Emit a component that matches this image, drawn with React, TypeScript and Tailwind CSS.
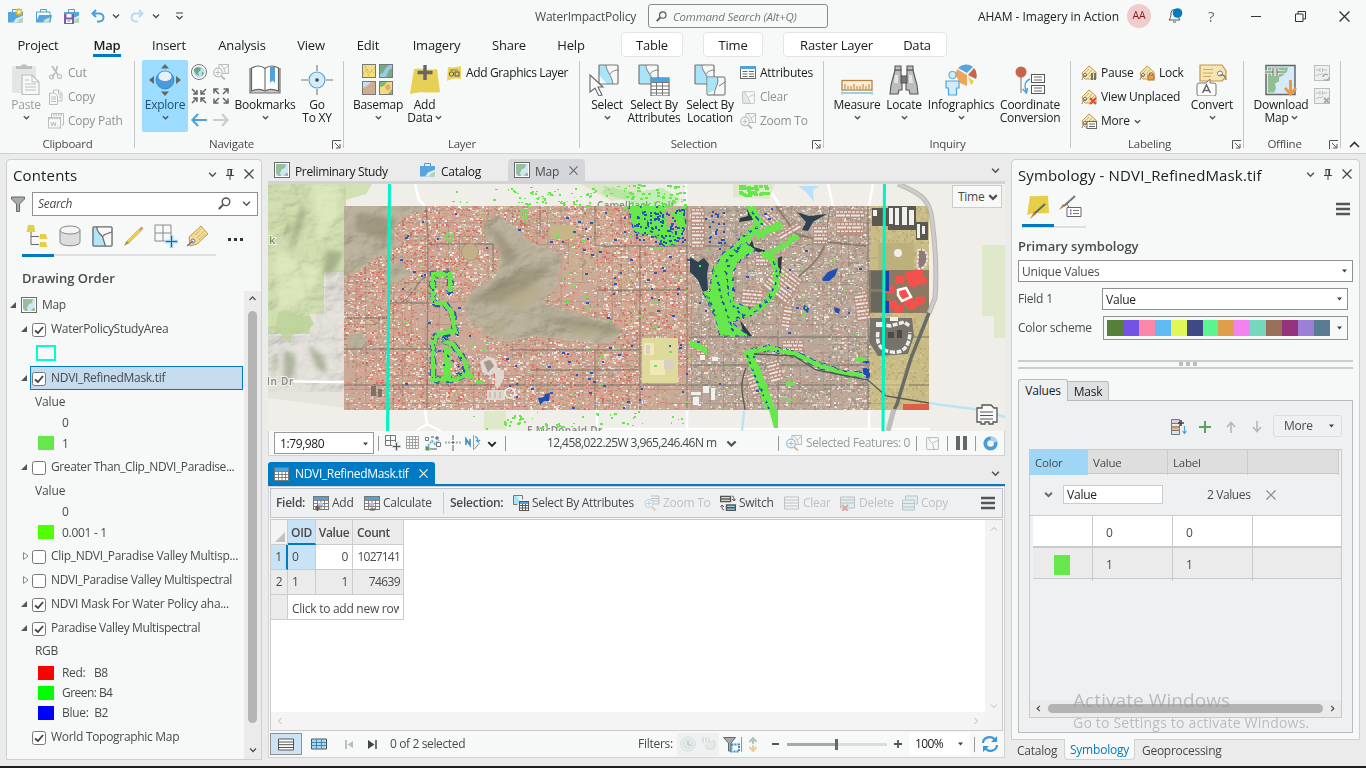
import React from "react";

type P = { children?: React.ReactNode; className?: string };

/* ---------- icon helpers ---------- */
const Ic = ({ s = 16, w, h, vb, children, className = "" }: { s?: number; w?: number; h?: number; vb?: string; children?: React.ReactNode; className?: string }) => (
  <svg width={w ?? s} height={h ?? s} viewBox={vb ?? `0 0 ${w ?? s} ${h ?? s}`} fill="none" className={"shrink-0 " + className}>{children}</svg>
);
const Chev = ({ c = "#505050", s = 8, sw = 1.5 }: { c?: string; s?: number; sw?: number }) => (
  <Ic w={s} h={s} vb="0 0 8 8"><path d="M1 2.500l3 3 3-3" stroke={c} strokeWidth={sw} /></Ic>
);
const Caret = () => <Ic w={5} h={4}><path d="M0 .5h5L2.500 3.500z" fill="#404040" /></Ic>;
const X = ({ c = "#404040", s = 10 }: { c?: string; s?: number }) => <Ic w={s} h={s} vb="0 0 10 10"><path d="M.5.5l9 9M9.500.5l-9 9" stroke={c} strokeWidth="1.200" /></Ic>;
const Pin = () => <Ic w={8} h={11}><path d="M1.500.500h5M2 0v6M5.500 0v6M4.800 0v6M0 6.500h8M4 6.500V11" stroke="#404040" /></Ic>;
const Burger = ({ w = 14 }: { w?: number }) => <Ic w={w} h={14}><path d={`M0 2h${w}M0 7h${w}M0 12h${w}`} stroke="#555" strokeWidth="2.600" /></Ic>;
const MapIcon = () => (
  <Ic s={16}><rect x=".5" y=".5" width="15" height="15" fill="#fff" stroke="#6a6a6a" /><path d="M2 2h12v12H2z" fill="#cfe6f7" /><path d="M2 2h10l-1 4-3 1-2 4 1 3H4l-1-2H2z" fill="#98bf99" /><path d="M10 14h4v-3h-2z" fill="#98bf99" /></Ic>
);
const Parcel = ({ s = 22, fill = "#b3e5f7", c = "#6a6a6a" }: { s?: number; fill?: string; c?: string }) => (
  <Ic s={s} vb="0 0 22 22"><rect x="1" y="1" width="20" height="20" rx="1" fill="#f7f9f8" /><path d="M1 1h4c0 5 3 7 6 10l3 10H1z" fill={fill} /><path d="M5 1c0 5 3 7 6 10l3 10M11 11C13 8 17 8 21 6" stroke={c} strokeWidth="1.300" /><rect x="1" y="1" width="20" height="20" rx="1" stroke={c} strokeWidth="1.400" /></Ic>
);
const Case = ({ k }: { k: number }) => (
  <Ic s={16}>
    <path d="M4.500 4V1.500h6V4" stroke="#4a9fd8" />
    {k === 1 ? <><path d="M.5 14V4h13.500v3" stroke="#4a9fd8" fill="#fff" /><path d="M0 14.500L3 7h13l-1.500 7.500z" fill="#57a5dc" /><path d="M7 14.500c1-3 3-4 7-5l-1 5z" fill="#cfe3c5" /></> : <><path d="M0 4h15v10.500H0z" fill="#57a5dc" /><path d="M5 14.500l3-4 7-3v7z" fill="#d5ecf5" /><path d="M9 14.500l2-3 4-2v5z" fill="#b5d6a6" /></>}
    {k === 0 && <g stroke="#d9b838" strokeWidth="1.200"><circle cx="11" cy="4" r="2.300" fill="#fff3b0" /><path d="M11 0v1M11 7v1M7 4h1M14 4h1.500M8 1l1 1M14 1l-1 1M8 7l1-1M14 7l-1-1" /></g>}
    {k === 2 && <><path d="M0 6h10v10H0z" fill="#7d5fa8" /><path d="M2.500 6h5v3.500h-5zM2 11.500h6V15H2z" fill="#fff" /><path d="M3.500 13h3" stroke="#7d5fa8" /></>}
  </Ic>
);
const Undo = ({ flip = false, c = "#4a9fd8" }: { flip?: boolean; c?: string }) => (
  <Ic s={14} className={flip ? "-scale-x-100" : ""}><path d="M5 1L1.500 4.500 5 8M2 4.500h6.500a4 4 0 010 8H6" stroke={c} strokeWidth="2" /></Ic>
);
const Dim = "#bdbdbd";
const Cut = () => <Ic><path d="M4 1l6 9M9.500 1L8 6M7 8l-3 4" stroke={Dim} strokeWidth="1.800" /><circle cx="3.500" cy="12" r="2" stroke={Dim} strokeWidth="1.200" /><circle cx="11.500" cy="11.500" r="2" stroke={Dim} strokeWidth="1.200" /></Ic>;
const CopyI = () => <Ic><path d="M5.500 1h5l3.500 3.500V12H5.500z" fill="#f7f9f8" stroke={Dim} /><path d="M1.500 4h5L9.500 7v8.500h-8z" fill="#f7f9f8" stroke={Dim} /><path d="M3 8h5M3 10h5M3 12.500h5M10.500 1v4H14M11 7h2M11 9h2" stroke={Dim} /></Ic>;
const CopyPath = () => <Ic><path d="M3.500 4V.5h12V12H14" stroke={Dim} /><path d="M5 2h9M1 5.500h12" stroke={Dim} strokeWidth="1.500" strokeDasharray="1.500 1" /><rect x=".5" y="4.500" width="12" height="10.500" stroke={Dim} /><path d="M3 9l1 4 1.500-4 1.500 4 1-4M9.500 13h1" stroke={Dim} /></Ic>;
const Paste = () => <Ic w={28} h={31}><rect x="0" y="2" width="24" height="27" rx="2" fill="#e4e5e5" /><path d="M4 5V2h5.500V.5h5V2H20v3z" fill={Dim} /><path d="M10 11h10l7 7v12.500H10z" fill="#f7f9f8" stroke={Dim} strokeWidth="1.200" /><path d="M20 11v7h7M13 16h4M13 20h11M13 23h11M13 26h11" stroke={Dim} /></Ic>;
const ExploreI = () => <Ic s={32}><path d="M16 0l4 4.500h-8zM16 32l4-4.500h-8zM0 16l5-4v8zM32 16l-5-4v8z" fill="#666" /><circle cx="16" cy="16" r="9" fill="#4a9bdb" stroke="#2c78b5" strokeWidth=".7" /><path d="M9.500 12.500a6.500 5 0 0113 0c0 6-13 6-13 0z" fill="#e6f1f8" /></Ic>;
const Globe = () => <Ic><circle cx="8" cy="8" r="7.500" fill="#fff" stroke="#777" /><circle cx="8" cy="8" r="5.700" fill="#b8ddf2" /><path d="M3 5l3-2 4 1-1 3-2 1 1 4-3-2-2-3zM11 8l2 1-2 3z" fill="#6ca97c" /></Ic>;
const ZoomSel = ({ c = Dim, blue = false }: { c?: string; blue?: boolean }) => <Ic><rect x="6" y=".5" width="9.500" height="9" stroke={c} /><path d="M8 1l3 4 4-3M11 5l2 5" stroke={c} /><circle cx="5" cy="8.500" r="4.300" fill="#f7f9f8" stroke={blue ? "#8fc0de" : c} strokeWidth="1.200" /><path d="M2.500 8.500h5M5 6v5" stroke={blue ? "#8fc0de" : c} /><path d="M8 12l4 3.500" stroke={blue ? "#d9b89a" : c} strokeWidth="2" /></Ic>;
const Arrows4 = ({ out = false }: { out?: boolean }) => (
  <Ic s={16}><path stroke="#666" strokeWidth="1.500" d={out ? "M1 1l5 5M1 5.500V1h4.500M15 1l-5 5M10.500 1H15v4.500M1 15l5-5M1 10.500V15h4.500M15 15l-5-5M10.500 15H15v-4.500" : "M1 1l4.500 4.500M2 6h4V2M15 1l-4.500 4.500M14 6h-4V2M1 15l4.500-4.500M2 10h4v4M15 15l-4.500-4.500M14 10h-4v4"} /></Ic>
);
const ArrowH = ({ c, flip = false }: { c: string; flip?: boolean }) => <Ic s={16} className={flip ? "-scale-x-100" : ""}><path d="M7 2L1.500 8 7 14M1.500 8H16" stroke={c} strokeWidth="2.200" /></Ic>;
const Book = () => <Ic w={32} h={30}><path d="M1 3h30v25H1z" fill="#c9c9c9" /><path d="M2.500 3C8 0 13 1 16 3.500 19 1 24 0 29.500 3v23c-5-2-10-2-13.500 0-3.500-2-8.500-2-13.500 0z" fill="#fff" stroke="#666" strokeWidth="1.200" /><path d="M16 3.500V26M1 3v25h30V3" stroke="#777" strokeWidth="1.200" /><path d="M21 2h5v16l-2.500-2.500L21 18z" fill="#4fa3dc" /></Ic>;
const GoXY = () => <Ic s={32}><circle cx="16" cy="16" r="8" fill="#d3ecfa" stroke="#5aa0cd" strokeWidth="1.100" /><circle cx="16" cy="16" r="1.800" fill="#444" /><path d="M16 1v6M16 25v6M0 16h7M25 16h7" stroke="#777" strokeWidth="1.100" /></Ic>;
const Basemap = () => <Ic w={32} h={31}><g stroke="#777"><rect x=".5" y=".5" width="13" height="13" fill="#efe082" /><rect x="17.500" y=".5" width="13" height="13" fill="#9ccbe8" /><rect x=".5" y="17.500" width="13" height="13" fill="#c9dff0" /><rect x="17.500" y="17.500" width="13" height="13" fill="#f1dd7c" /></g><path d="M1 10l4-5 3 4 5-6M3 2l4 10M9 6l4 4" stroke="#ddb33c" strokeDasharray="2 1" /><path d="M18 1h9l-4 4-2 4-3 1zM24 13l3-7 3-2v9z" fill="#75ad86" /><path d="M1 24l5-3 3-3h4v12H1z" fill="#cfae90" /><path d="M18 18h7l-3 4-4 1zM26 30l4-5v5z" fill="#82b77d" /><path d="M23 22l4-2 2 4-4 3z" fill="#eda46a" /></Ic>;
const AddData = () => <Ic w={32} h={32}><path d="M5 5c7-2 14 2 23 0l3 23c-9 2-18-2-30 2z" fill="#e6d154" /><path d="M16 1v15M8.500 8.500h15" stroke="#666" strokeWidth="3.400" /></Ic>;
const AddGfx = () => <Ic w={16} h={15}><path d="M2 1c4 1 8 0 13-1v13c-5-1-9-1-14 2z" fill="#ead45c" /><circle cx="5.500" cy="8" r="2.200" stroke="#555" /><rect x="9" y="6" width="4" height="4" stroke="#555" /><path d="M4 4h8" stroke="#8a7c3b" /></Ic>;
const SelIcon = ({ k }: { k: number }) => (
  <Ic s={32}>
    <g transform={k === 0 ? "translate(9 0)" : ""}><path d="M1 1h20v19H1z" fill="#f7f9f8" /><path d={k === 0 ? "M1 1h8c0 7 5 8 6 19h-6L1 11z" : "M1 1h7c1 7 6 8 6 11l-2 8H1z"} fill="#aae4f8" /><path d="M8 1c0 7 5 8 7 19M12 10c2-3 5-4 9-4" stroke="#888" /><rect x="1" y="1" width="19" height="19" rx="1" stroke="#777" strokeWidth="1.200" /></g>
    {k === 0 && <path d="M1 11l13 12H9l4 8-3 1-4-8-5 4z" fill="#fff" stroke="#666" strokeWidth="1.100" />}
    {k === 1 && <><rect x="13" y="14" width="18" height="18" fill="#fff" stroke="#555" /><path d="M13 14h18v4H13z" fill="#4fa3dc" /><path d="M13 18.500h18M13 22h18M13 25.500h18M13 29h18M18.500 18v13M24.500 18v13" stroke="#777" /></>}
    {k === 2 && <><rect x="13" y="13" width="18" height="18" rx="1" fill="#f7f9f8" stroke="#666" /><path d="M13.500 13.500H23c3 6-2 9-3 13l-6.500 3z" fill="#aae4f8" /><path d="M23 13c3 6-2 9-3 18M25 22l6-4" stroke="#777" /></>}
  </Ic>
);
const Grid = ({ c = "#777", top = "#4fa3dc", w = 16, sub = null }: { c?: string; top?: string; w?: number; sub?: React.ReactNode }) => (
  <Ic w={16} h={16}><rect x=".5" y="1.500" width={w - 1} height={13} fill="#fff" stroke={c} /><path d={`M1 2h${w - 2}v3H1z`} fill={top} /><path d={`M1 5.500h${w - 2}M1 8.500h${w - 2}M1 11.500h${w - 2}M4.500 5v9M8 5v9M11.500 5v9`} stroke={c} strokeWidth=".9" />{sub}</Ic>
);
const Attr = () => <Ic><rect x=".5" y="1.500" width="15" height="12" fill="#fff" stroke="#666" /><path d="M0 1h16v3H0z" fill="#4fa3dc" /><path d="M2.500 6.500h5M2.500 9h5M2.500 11.500h5M9 6.500h5M9 9h5M9 11.500h5" stroke="#666" /></Ic>;
const Measure = () => <Ic w={32} h={20} className="translate-y-[6px]"><rect x="1" y="4.500" width="30" height="9.500" fill="#f8eed7" stroke="#b78342" strokeWidth="1.300" /><path d="M4 8v5M7 10v3M10 10v3M13 8v5M16 10v3M19 10v3M22 8v5M25 10v3M28 8v5" stroke="#c07f2f" /><path d="M1 15.500v3M31 15.500v3M2 17h28" stroke="#45a0da" /></Ic>;
const Bino = () => <Ic w={30} h={30}><g stroke="#555" fill="#bdbdbd" strokeWidth="1.100"><path d="M6 5h6v4l1 4v12h-3l-1 4H1l1-9L5 9zM24 5h-6v4l-1 4v12h3l1 4h8l-1-9-3-11z" /><path d="M6 1h6v4H6zM18 1h6v4h-6z" /><path d="M12 11h6v7h-6z" fill="#777" /></g><path d="M6 10h3v8H5zM20 10h3l1 8h-4z" fill="#e4e4e4" /></Ic>;
const Info = () => <Ic w={32} h={32}><path d="M22 11L12 5a11 11 0 00-1 7l4 7 7 3z" fill="#efa45a" /><path d="M22 9L13 4a11 11 0 0115-1z" fill="#57a5dc" /><path d="M23 11l6-7a11 11 0 012 11z" fill="#c8644a" /><path d="M23 13l6 4a9 9 0 01-3 4z" fill="#e6cf4a" /><circle cx="7.500" cy="11" r="3.700" fill="#d3ecfa" stroke="#4fa3dc" /><path d="M1 24v-7h13v7h-2.500v7h-8v-7z" fill="#d3ecfa" stroke="#4fa3dc" strokeWidth="1.200" /></Ic>;
const Coord = () => <Ic w={32} h={30}><path d="M7 8v20" stroke="#777" /><circle cx="7" cy="7" r="5.500" fill="#c8644a" /><g fill="#fff" stroke="#555"><rect x="17.500" y="9.500" width="13" height="8" /><rect x="17.500" y="20.500" width="13" height="8" /></g><path d="M20 12h8M20 15h8M20 23h8M20 26h8" stroke="#666" /><path d="M16 14c-5 2-6 7-4 12M8.500 24l4 4 1-5" stroke="#4fa3dc" strokeWidth="1.500" /></Ic>;
const House = ({ sub }: { sub: React.ReactNode }) => <Ic><path d="M1 8L8 1l7 6v7H4l-2-2z" fill="#f5e5b2" stroke="#b9924e" strokeWidth=".9" /><path d="M3 9l5-5M5 11l6-6M8 12l5-5" stroke="#c4a565" strokeWidth=".8" /><circle cx="4" cy="10" r="1.600" fill="#fff" stroke="#777" /><path d="M1 15c1-4 3-5 4-4" stroke="#777" />{sub}</Ic>;
const Tag = () => <Ic w={32} h={32}><path d="M4 1h22l4 6v6l-4 4H4z" fill="#f5e5b2" stroke="#c69549" strokeWidth="1.200" /><path d="M7 5.500h10M7 9h10M7 12.500h8" stroke="#cda85e" /><circle cx="24" cy="9.500" r="2.500" fill="#fff" stroke="#777" /><path d="M24 11c4-1 6 2 6 5" stroke="#777" strokeWidth="1.300" /><path d="M3 19h7l4-4v4h4a2 2 0 012 2v9a2 2 0 01-2 2H3a2 2 0 01-2-2v-9a2 2 0 012-2z" fill="#fff" stroke="#777" /><path d="M6.500 29l4-8 4 8M8 26.500h5" stroke="#666" strokeWidth="1.500" /></Ic>;
const Download = () => <Ic w={32} h={32}><rect x="1" y="1.500" width="29" height="29" fill="#d6ebf9" stroke="#666" strokeWidth="1.500" /><path d="M3 3.500h20l-1 4-4 4-4 2 0 4-4 2 1 5-2 4H3z" fill="#92bf92" /><path d="M0 8h8M8 4v8M12 4v8M12 8h8" stroke="#fff" strokeWidth="3" /><path d="M0 8h8M8 4v8M12 4v8M12 8h8" stroke="#555" /><path d="M25.500 16v13M20 24l5.500 6 5.500-6" stroke="#ee9a42" strokeWidth="3" /></Ic>;
const OffI = ({ x = false }: { x?: boolean }) => <Ic><rect x=".5" y=".5" width="15" height="15" fill="#eef0f0" stroke={Dim} /><path d="M2 5h4M6 3v4M8.500 3v4M9 5h4M2 11c3-3 6 0 7-3" stroke={Dim} />{x ? <path d="M10 10l5 5M15 10l-5 5" stroke="#a8a8a8" strokeWidth="1.800" /> : <path d="M9 12a3 3 0 015-2M15 12.500a3 3 0 01-5 2" stroke="#a8a8a8" strokeWidth="1.600" />}</Ic>;
const Launcher = () => <Ic w={9} h={9}><path d="M.5 9V.5H9M3 3l4.500 4.500M8 4v4H4" stroke="#555" /></Ic>;
const Mag = ({ s = 13 }: { s?: number }) => <Ic s={s} vb="0 0 13 13"><circle cx="8" cy="4.800" r="3.800" stroke="#555" strokeWidth="1.400" /><path d="M5.200 7.600L.8 12" stroke="#555" strokeWidth="2" /></Ic>;

/* ---------- ribbon ---------- */
const Group = ({ w, label, items, launch = false, labelCls = "" }: { w: string; label: string; items: React.ReactNode; launch?: boolean; labelCls?: string }) => (
  <div className={"relative flex h-[96px] shrink-0 flex-col " + w}>
    <div className="flex h-[77px] pt-[3px]">{items}</div>
    <div className={"flex h-[19px] items-center justify-center text-[11.5px] text-[#4a4a4a] " + labelCls}>{label}</div>
    {launch && <div className="absolute right-[3px] bottom-[4px]"><Launcher /></div>}
    <div className="absolute right-0 top-1 h-[87px] w-px bg-[#c4c6c8]" />
  </div>
);
const Big = ({ w, icon, l1, l2, chev, tone = "" }: { w: string; icon: React.ReactNode; l1: string; l2?: string; chev?: boolean; tone?: string }) => (
  <div className={"flex h-[72px] shrink-0 flex-col items-center whitespace-nowrap leading-[13px] " + w + " " + tone}>
    <div className="flex h-[38px] items-center justify-center pt-[1px]">{icon}</div>
    <div>{l1}</div>
    <div className="flex h-[13px] items-center gap-[2px]">{l2}{chev && <Chev sw={1.500} s={7} />}</div>
  </div>
);
const Col = ({ children, className = "" }: P) => <div className={"flex flex-col pt-px " + className}>{children}</div>;
const SRow = ({ icon, children, dim = false }: { icon: React.ReactNode; children: React.ReactNode; dim?: boolean }) => (
  <div className={"flex h-6 items-center gap-1 whitespace-nowrap " + (dim ? "text-[#8f9191]" : "")}>{icon}{children}</div>
);
const tabs: [string, string][] = [["Project", "w-[76px]"], ["Map", "w-[62px] font-semibold"], ["Insert", "w-[62px]"], ["Analysis", "w-[84px]"], ["View", "w-[54px]"], ["Edit", "w-[60px]"], ["Imagery", "w-[77px]"], ["Share", "w-[68px]"], ["Help", "w-[56px]"]];

const Ribbon = () => (
  <header className="h-[154px] border-b border-[#cfd1d2] bg-[#f7f9f8] tracking-[-0.25px] text-[#202020]">
    <div className="flex h-8 items-center">
      <div className="flex w-[500px] items-center pl-2">
        <Case k={0} /><div className="w-3" /><Case k={1} /><div className="w-3" /><Case k={2} /><div className="w-[11px]" /><Undo /><div className="w-[7px]" /><Chev /><div className="w-[10px]" /><Undo flip c="#b9dbf0" /><div className="w-2" /><Chev /><div className="w-[15px]" />
        <Ic w={10} h={9}><path d="M1 1h7M1.500 4l3 3 3-3" stroke="#404040" strokeWidth="1.200" /></Ic>
      </div>
      <div className="w-[148px] pl-[35px] pt-px text-[12px] tracking-[-0.2px] text-[#4a4a4a]">WaterImpactPolicy</div>
      <div className="flex h-6 w-[180px] items-center gap-[7px] rounded-[3px] border border-[#8a8c8c] pl-[7px] text-[11.500px] italic text-[#767676]"><Mag s={11} /><span className="-ml-px pt-px tracking-[-0.2px]">Command Search (Alt+Q)</span></div>
      <div className="w-[300px] pr-[9px] pt-px text-right text-[12px] tracking-[-0.04px]">AHAM - Imagery in Action</div>
      <div className="-ml-px flex size-6 items-center justify-center rounded-full bg-[#f2cccc] text-[10.500px] text-[#7a1f1f]">AA</div>
      <Ic w={16} h={16} className="ml-4"><path d="M2 12h11c-1-1-2-3-2-7a3.500 3.500 0 00-7 0c0 4-1 6-2 7zM6 14h3" stroke="#555" /><circle cx="10.500" cy="5" r="4.800" fill="#007ac2" /></Ic>
      <div className="ml-[25px] w-3 text-[15px] text-[#6a6a6a]">?</div>
      <div className="ml-[31px] h-px w-[10px] bg-[#333]" />
      <Ic w={11} h={11} className="ml-[34px]"><path d="M.5 3h7.500v7.500H.5zM3 3V.5h7.500V8H8" stroke="#333" /></Ic>
      <div className="ml-[33px]"><X c="#333" s={11} /></div>
    </div>
    <div className="flex h-[25px] items-center text-center text-[13px] tracking-[-0.2px]">
      {tabs.map(([t, w]) => (
        <div key={t} className={"relative shrink-0 pt-[2px] " + w}>{t}{t === "Map" && <div className="absolute -bottom-[2px] left-[17px] h-[3px] w-7 bg-[#007ac2]" />}</div>
      ))}
      <div className="ml-[22px] h-[25px] w-[62px] rounded border border-[#e3e4e4] bg-white leading-[25px]">Table</div>
      <div className="ml-5 h-[25px] w-[60px] rounded border border-[#e3e4e4] bg-white leading-[25px]">Time</div>
      <div className="ml-5 flex h-[25px] w-[164px] rounded border border-[#e3e4e4] bg-white leading-[25px]"><span className="w-[105px]">Raster Layer</span><span className="w-[56px]">Data</span></div>
    </div>
    <div className="flex text-[12px]">
      <Group w="w-[135px]" label="Clipboard" items={<>
        <Big w="ml-[7px] w-[38px]" tone="text-[#9b9d9d]" icon={<Paste />} l1="Paste" chev />
        <Col className="ml-[3px]"><SRow dim icon={<Cut />}>Cut</SRow><SRow dim icon={<CopyI />}>Copy</SRow><SRow dim icon={<CopyPath />}>Copy Path</SRow></Col></>} />
      <Group w="w-[209px]" label="Navigate" labelCls="pr-[16px]" launch items={<>
        <Big w="ml-[7px] w-[46px] rounded-[2px] bg-[#9cdcfe]" icon={<ExploreI />} l1="Explore" chev tone="text-[#1f4e7a]" />
        <div className="ml-[3px] grid h-[72px] grid-cols-[16px_16px] items-center gap-x-[6px]"><Globe /><ZoomSel /><Arrows4 /><Arrows4 out /><ArrowH c="#4fa3dc" /><ArrowH c="#cbcdcd" flip /></div>
        <Big w="ml-[4px] w-[64px]" icon={<Book />} l1="Bookmarks" chev />
        <Big w="w-[40px]" icon={<GoXY />} l1="Go" l2="To XY" /></>} />
      <Group w="w-[236px]" label="Layer" launch={false} items={<>
        <Big w="ml-[8px] w-[52px]" icon={<Basemap />} l1="Basemap" chev />
        <Big w="w-[41px]" icon={<AddData />} l1="Add" l2="Data" chev />
        <Col className="ml-px"><SRow icon={<AddGfx />}><span className="tracking-[-0.36px]">Add Graphics Layer</span></SRow></Col></>} />
      <Group w="w-[244px]" label="Selection" labelCls="pr-[16px]" launch items={<>
        <Big w="ml-[8px] w-[38px]" icon={<div className="pr-1"><SelIcon k={0} /></div>} l1="Select" chev />
        <Big w="-ml-px w-[58px]" icon={<SelIcon k={1} />} l1="Select By" l2="Attributes" />
        <Big w="w-[54px]" icon={<SelIcon k={2} />} l1="Select By" l2="Location" />
        <Col className="ml-[3px]"><SRow icon={<Attr />}>Attributes</SRow><SRow dim icon={<div className="flex w-4 justify-center"><Parcel s={13} fill="#e5e6e6" c={Dim} /></div>}>Clear</SRow><SRow dim icon={<ZoomSel />}>Zoom To</SRow></Col></>} />
      <Group w="w-[247px]" label="Inquiry" items={<>
        <Big w="ml-[8px] w-[50px]" icon={<Measure />} l1="Measure" chev />
        <Big w="ml-px w-[42px]" icon={<Bino />} l1="Locate" chev />
        <Big w="ml-px w-[70px]" icon={<Info />} l1="Infographics" chev />
        <Big w="w-[68px]" icon={<Coord />} l1="Coordinate" l2="Conversion" /></>} />
      <Group w="w-[173px]" label="Labeling" labelCls="pr-[16px]" launch items={<>
        <Col className="ml-[10px] w-[106px]">
          <div className="flex"><div className="w-[58px]"><SRow icon={<House sub={<path d="M11 8v7M14 8v7" stroke="#666" strokeWidth="1.800" />} />}>Pause</SRow></div><SRow icon={<House sub={<><rect x="9" y="10" width="6" height="5" fill="#e8a04c" stroke="#a9702c" /><path d="M10.500 10V8h3v2" stroke="#a9702c" /></>} />}>Lock</SRow></div>
          <SRow icon={<House sub={<path d="M9 9l6 6M15 9l-6 6" stroke="#d9512c" strokeWidth="2" />} />}>View Unplaced</SRow>
          <SRow icon={<House sub={<><rect x="6" y="8.500" width="9.500" height="7" fill="#fff" stroke="#666" /><path d="M8 11h6M8 13.500h6" stroke="#666" /></>} />}>More <Chev s={7} /></SRow>
        </Col>
        <Big w="w-[50px]" icon={<Tag />} l1="Convert" chev /></>} />
      <Group w="w-[97px]" label="Offline" labelCls="pr-[16px]" launch items={<>
        <Big w="ml-[7px] w-[60px]" icon={<Download />} l1="Download" l2="Map" chev />
        <Col className="ml-[3px] h-12 justify-around"><OffI /><OffI x /></Col></>} />
      <div className="flex items-end pb-[5px] pl-[8px]"><Ic w={11} h={7}><path d="M1 6l4.500-4.500L10 6" stroke="#333" strokeWidth="1.600" /></Ic></div>
    </div>
  </header>
);

/* ---------- contents pane ---------- */
const Check = ({ on = true }: { on?: boolean }) => <Ic s={14}><rect x=".5" y=".5" width="13" height="13" rx="2" fill="#fff" stroke="#777" /> {on && <path d="M3 7.500L6 10l5-6" stroke="#444" strokeWidth="1.900" />}</Ic>;
const Tri = ({ open = true }: { open?: boolean }) => <Ic w={6} h={8}>{open ? <path d="M6 1v6H0z" fill="#555" /> : <path d="M.5.5v7L5 4z" fill="#fff" stroke="#888" />}</Ic>;
const Layer = ({ children, on = true, open = true, arrow = true, className = "" }: { children: React.ReactNode; on?: boolean; open?: boolean; arrow?: boolean; className?: string }) => (
  <div className={"flex h-6 items-center pl-[14px] " + className}>
    <div className={"flex w-[9px] items-center " + (open ? "" : "pl-[2px]")}>{arrow && <Tri open={open} />}</div>
    <div className="ml-[2px] flex h-6 flex-1 items-center whitespace-nowrap"><div className="pt-px"><Check on={on} /></div><span className="ml-[5px]">{children}</span></div>
  </div>
);
const Sw = ({ c, children, h = "h-5" }: { c?: string; children: React.ReactNode; h?: string }) => (
  <div className={"flex items-center pl-[31px] pt-px " + h}><div className={"h-[14px] w-4 " + (c ?? "")} /><span className="ml-2 whitespace-pre pt-px">{children}</span></div>
);
const PaneHead = ({ children }: P) => (
  <div className="flex h-[31px] items-center pl-[6px] text-[15px] tracking-[0.14px] text-[#202020]"><span className="flex-1">{children}</span><div className="flex items-center pr-[7px] pb-[3px]"><Chev s={9} sw={1.300} /><div className="w-[9px]" /><Pin /><div className="w-[10px]" /><X /></div></div>
);
const Contents = () => (
  <section className="ml-[6px] mt-[5px] flex h-[601px] w-[256px] flex-col rounded-t-[4px] border border-[#cdcfd0] bg-[#f7f9f8] text-[12px] tracking-[-0.3px] text-[#4a4a4a]">
    <PaneHead>Contents</PaneHead>
    <div className="flex h-[25px] shrink-0 items-center">
      <Ic w={14} h={16} className="ml-1"><path d="M.5 1h13v2L8.500 8v7.500h-3V8L.5 3z" fill="#aaa" stroke="#666" /></Ic>
      <div className="ml-[7px] flex h-6 w-[226px] items-center border border-[#8f9191] bg-white pl-[5px]"><span className="flex-1 italic">Search</span><Mag s={13} /><div className="w-[11px]" /><Chev s={9} sw={1.300} /><div className="w-[6px]" /></div>
    </div>
    <div className="ml-[15px] mt-[7px] flex h-[33px] w-[194px] shrink-0 border-b-2 border-[#dedfe0]">
      {[
        <Ic key={0} w={24} h={24}><path d="M2 1h6l1.500 7H.5zM14 10h6l1.500 5h-8zM14 18h6l1.500 5h-8z" fill="#e6cf47" /><path d="M5 8v12.500h8M5 12.500h8" stroke="#666" /></Ic>,
        <Ic key={1} w={22} h={22}><path d="M1 5v12c0 5 20 5 20 0V5" fill="#ddd" stroke="#888" /><ellipse cx="11" cy="5" rx="10" ry="4" fill="#f5f5f5" stroke="#888" /></Ic>,
        <Parcel key={2} s={21} />,
        <Ic key={3} w={22} h={22}><path d="M3 19l1-3L16 4l2 2L6 18z" fill="#edcf50" stroke="#d3aa35" strokeWidth=".6" /><path d="M16 4l2.500-2.500 2 2L18 6z" fill="#e08b83" /><path d="M1 21l2.500-5 2.500 2z" fill="#a88a50" /></Ic>,
        <Ic key={4} w={24} h={24}><path d="M1 1h16v16H1zM9 1v16M1 9h16" stroke="#888" /><path d="M17.500 11v13M11 17.500h13" stroke="#9fd3f2" strokeWidth="3.500" /><path d="M17.500 12v11M12 17.500h11" stroke="#555" /></Ic>,
        <Ic key={5} w={22} h={22}><path d="M2 12L14 1l7 8L10 19l-7 2z" fill="#f1dc98" stroke="#c29a45" /><path d="M8 10l6-6M10 13l7-7M12 15l6-6" stroke="#c3a357" strokeDasharray="2 1" /><circle cx="6" cy="16" r="2" fill="#fff" stroke="#777" /><path d="M0 21l6-5" stroke="#777" strokeWidth="1.500" /></Ic>,
      ].map((n, i) => <div key={i} className="relative flex h-[26px] w-8 shrink-0 items-center justify-center">{n}{i === 0 && <div className="absolute left-0 top-[31px] h-[3px] w-8 bg-[#007ac2]" />}</div>)}
      <div className="ml-[14px] flex h-[32px] shrink-0 items-center gap-[3px]"><i className="size-[3px] bg-[#333]" /><i className="size-[3px] bg-[#333]" /><i className="size-[3px] bg-[#333]" /></div>
    </div>
    <div className="mt-[10px] h-[25px] shrink-0 pl-[15px] text-[13px] font-semibold leading-[25px] tracking-[0px]">Drawing Order</div>
    <div className="flex min-h-0 flex-1">
      <div className="w-[237px] pt-[2px]">
        <div className="flex h-6 items-center pl-[3px]"><Tri /><div className="w-[5px]" /><MapIcon /><span className="ml-[5px]">Map</span></div>
        <Layer>WaterPolicyStudyArea</Layer>
        <div className="h-[25px] pl-[29px] pt-[4px]"><div className="h-4 w-5 border-2 border-[#0fc]" /></div>
        <div className="flex h-6 items-center pl-[14px]"><div className="w-[9px]"><Tri /></div><div className="flex h-6 w-[213px] items-center border border-[#007ac2] bg-[#c5dcee] pl-[1px]"><div className="pt-px"><Check /></div><span className="ml-[5px]">NDVI_RefinedMask.tif</span></div></div>
        <div className="h-[22px] pl-7 leading-[23px] tracking-[-0.1px]">Value</div>
        <Sw>0</Sw><Sw c="bg-[#66e84c]" h="h-[21px]">1</Sw>
        <Layer on={false} className="mt-[2px]"><span className="tracking-[-0.4px]">Greater Than_Clip_NDVI_Paradise...</span></Layer>
        <div className="h-[22px] pl-7 leading-[23px] tracking-[-0.1px]">Value</div>
        <Sw>0</Sw><Sw c="bg-[#50ff00]" h="h-[21px]">0.001 - 1</Sw>
        <Layer on={false} open={false} className="mt-[2px]">Clip_NDVI_Paradise Valley Multisp...</Layer>
        <Layer on={false} open={false}><span className="tracking-[-0.37px]">NDVI_Paradise Valley Multispectral</span></Layer>
        <Layer><span className="tracking-[-0.3px]">NDVI Mask For Water Policy aha...</span></Layer>
        <Layer><span className="tracking-[-0.38px]">Paradise Valley Multispectral</span></Layer>
        <div className="h-[22px] pl-7 leading-[22px]">RGB</div>
        <Sw c="bg-[#f00]">{"Red:   B8"}</Sw><Sw c="bg-[#0f0]"><span className="tracking-[-0.55px]">{"Green: B4"}</span></Sw><Sw c="bg-[#00f]">{"Blue:  B2"}</Sw>
        <Layer arrow={false} className="mt-[3px]">World Topographic Map</Layer>
      </div>
      <div className="flex w-[17px] flex-col items-center bg-[#ebebeb] pt-[5px]">
        <Ic w={7} h={5}><path d="M.5 4l3-3 3 3" stroke="#555" strokeWidth="1.300" /></Ic>
        <div className="mt-[10px] h-[412px] w-[9px] rounded-full bg-[#b4b4b4]" />
        <div className="mt-[23px]"><Chev s={8} sw={1.300} /></div>
      </div>
    </div>
  </section>
);

/* ---------- map canvas ---------- */
type Pt = [number, number];
const rng = (seed: number) => () => { seed = (seed * 1664525 + 1013904223) >>> 0; return seed / 4294967296; };
const inside = (x: number, y: number, p: Pt[]) => {
  let r = false;
  for (let i = 0, j = p.length - 1; i < p.length; j = i++) {
    const [xi, yi] = p[i], [xj, yj] = p[j];
    if (yi > y !== yj > y && x < ((xj - xi) * (y - yi)) / (yj - yi) + xi) r = !r;
  }
  return r;
};
const hills: Pt[][] = [
  [[340, 202], [428, 202], [426, 210], [404, 216], [392, 230], [400, 244], [386, 254], [372, 260], [362, 270], [340, 278]],
  [[484, 222], [498, 215], [514, 226], [530, 242], [562, 254], [558, 284], [542, 304], [580, 314], [612, 322], [622, 332], [612, 343], [570, 341], [535, 336], [505, 342], [484, 334], [462, 308], [468, 294], [496, 276], [500, 250], [484, 236]],
  [[387, 264], [403, 262], [408, 274], [396, 284], [384, 278]],
  [[348, 334], [360, 331], [368, 340], [360, 350], [348, 349]],
];
const golf: Pt[][] = [
  [[712, 272], [723, 253], [742, 240], [756, 250], [742, 258], [733, 272], [734, 302], [750, 308], [744, 318], [731, 322], [749, 336], [720, 336], [714, 314], [703, 292], [710, 290]],
  [[628, 206], [640, 196], [660, 200], [668, 214], [684, 208], [686, 226], [676, 245], [664, 246], [655, 236], [634, 232]],
];
const build = () => {
  const r = rng(77);
  const buckets: Record<string, string> = {};
  const put = (c: string, x: number, y: number, w = 2, h = 2) => { buckets[c] = (buckets[c] ?? "") + `M${x.toFixed(1)} ${y.toFixed(1)}h${w}v${h}h-${w}z`; };
  const urban = ["#cf7f6f", "#b99b82", "#ead8ce", "#d9a893", "#e89d90", "#ad917c", "#d2c4a2", "#c69f8a", "#da8c7e", "#f2e6e0", "#b58d78", "#c3b39c", "#e0b2a4", "#c9ae88"];
  const east = ["#b7a796", "#e6ddd6", "#a08f80", "#cdbcae", "#bca090", "#968c84", "#dabcb0", "#c9937f", "#bcb496", "#a2968a"];
  for (let y = 206; y < 410; y += 2) for (let x = 344; x < 929; x += 2) {
    if (x > 869) { if (r() < 0.25 && !(x < 912 && y > 242 && y < 270)) put(r() < 0.5 ? "#b9aa78" : "#d4c78f", x, y); continue; }
    const bare = Math.sin(x / 37 + 2) * Math.cos(y / 29 - x / 90) > 0.55;
    if (r() < (bare ? 0.3 : 0.72)) { const a = x > 690 ? east : urban; put(a[(r() * a.length) | 0], x, y, 1 + ((r() * 3) | 0), 1 + ((r() * 2) | 0)); }
    if (r() < (bare ? 0.02 : 0.085)) put("#fbf8f6", x, y, 2 + ((r() * 2) | 0), 1 + ((r() * 2) | 0));
    if (r() < (x < 430 ? 0.08 : 0.05) && x < 690 && !bare) put("#df5f55", x, y, 2, 1 + ((r() * 2) | 0));
  }
  for (let i = 0; i < 190; i++) {
    const x = i < 50 ? 400 + r() * 170 : i < 150 ? 560 + r() * 130 : 690 + r() * 170, y = 208 + r() * 200;
    if (hills.some((p) => inside(x, y, p))) continue;
    put(r() < 0.7 ? "#3257bb" : "#66e84c", x, y, 2 + ((r() * 2) | 0), 2);
  }
  for (let i = 0; i < 90; i++) put("#66e84c", 425 + Math.pow(r(), 0.6) * 260, i < 60 ? 185 + r() * 21 : 411 + r() * 18, 1 + r() * 2, 1.5);
  for (let i = 0; i < 8; i++) { const cx = 505 + r() * 80, cy = 188 + r() * 14; for (let j = 0; j < 7; j++) put("#66e84c", cx + r() * 9, cy + r() * 5, 2, 1.5); }
  for (let i = 0; i < 5; i++) { const cx = 490 + r() * 120, cy = 413 + r() * 10; for (let j = 0; j < 6; j++) put("#66e84c", cx + r() * 9, cy + r() * 5, 2, 2); }
  for (let i = 0; i < 70; i++) put("#66e84c", 622 + r() * 64, 184 + r() * 40, 3, 2);
  for (let i = 0; i < 80; i++) put("#2453b2", 634 + r() * 50, 208 + r() * 34, 2, 2);
  for (let i = 0; i < 30; i++) put("#66e84c", 738 + r() * 28, 184 + r() * 10, 4, 3);
  for (let i = 0; i < 24; i++) put("#2453b2", 704 + r() * 20, 208 + r() * 40, 2, 2);
  return buckets;
};
const texture = build();
const marks = ["#66e84c", "#2453b2", "#3257bb"];
const streets = (() => {
  const r = rng(19);
  let d = "";
  for (let x = 348; x < 868; x += 7 + r() * 8) for (let y = 206; y < 410; ) { const l = 10 + r() * 30; if (r() < 0.55) d += `M${x.toFixed(1)} ${y.toFixed(1)}v${l.toFixed(1)}`; y += l; }
  for (let y = 210; y < 410; y += 7 + r() * 7) for (let x = 344; x < 868; ) { const l = 12 + r() * 36; if (r() < 0.55) d += `M${x.toFixed(1)} ${y.toFixed(1)}h${l.toFixed(1)}`; x += l; }
  return d;
})();
const blockRows = (x: number, y: number, w: number, h: number, ang: number, k: number) => (
  <g key={k} transform={`rotate(${ang} ${x} ${y})`} opacity=".85"><rect x={x} y={y} width={w} height={h} rx="2" fill="#b98f7f" />{Array.from({ length: Math.floor(h / 3.6) }, (_, i) => <path key={i} d={`M${x + 1} ${y + 2 + i * 3.6}h${w - 2}`} stroke="#f5f0ed" strokeWidth={i % 2 ? 2 : 1.4} strokeDasharray={i % 2 ? "9 1 4 1" : "3 1"} />)}</g>
);
const MapCanvas = () => {
  const G = "#66e84c", B = "#1f4fb0";
  return (
    <svg className="block h-[247px] w-full" viewBox="268 184 737 247" preserveAspectRatio="none">
      <defs>
        <filter id="soft"><feGaussianBlur stdDeviation="2.500" /></filter>
        <filter id="edge"><feGaussianBlur stdDeviation="1.800" /></filter>
        <filter id="fine"><feGaussianBlur stdDeviation="0.3" /></filter>
        <filter id="relief" x="0" y="0" width="100%" height="100%"><feTurbulence type="fractalNoise" baseFrequency="0.020 0.028" numOctaves="5" seed="8" /><feDiffuseLighting lightingColor="#fff" surfaceScale="11"><feDistantLight azimuth="225" elevation="52" /></feDiffuseLighting></filter>
        <filter id="ragged"><feTurbulence type="fractalNoise" baseFrequency="0.25" numOctaves="2" seed="4" /><feDisplacementMap in="SourceGraphic" scale="4" /></filter>
        <clipPath id="img"><rect x="344" y="206" width="585" height="204" /></clipPath>
        <clipPath id="ranges">{hills.map((p, i) => <polygon key={i} points={p.map((q) => q.join(",")).join(" ")} />)}</clipPath>
      </defs>
      <rect x="268" y="184" width="737" height="247" fill="#efeee8" />
      <path d="M268 184h104l-6 10-20 6v72h-22v42h-14v20h-42z" fill="#d3e1b2" />
      <path d="M326 272h20v136l-78-10v-62h42v-22h14z" fill="#e6e4dd" />
      <g opacity=".26" className="mix-blend-multiply"><rect x="268" y="184" width="78" height="208" filter="url(#relief)" /></g>
      <g filter="url(#soft)" opacity=".6"><path d="M302 205l4 4-6 24-12 20 6-26zM288 218l2 10-4 14zM326 250l18 2-10 20-12 4zM284 350l12 6-2 20-10 8zM274 352l4 10-6 18zM308 345l14 10 6 20-12-8z" fill="#8b9573" /><path d="M312 184l30 0-4 30-20 30zM276 250l20 10 12 40-30 10zM300 262l20 6-10 30z" fill="#e6efc6" /></g>
      <path d="M279 312l9-2 10 6 12 0 4 8-8 8-14 2-2 9-6-6-10-8z" fill="#bdd299" opacity=".8" />
      <path d="M294 381.500l56 .5M415 184l4 16 12 12M425 410l2 14-10 6M427 424l14 7M686 184v22M687 410v21M766 184l14 22M828 184l5 22M873 184l-4 22M869 410v21M597 410v21M600 429h330" stroke="#fff" strokeWidth="2.500" fill="none" />
      <path d="M733 184h42l-6 15-36-2zM484 411h22v18h-22z" fill="#dde9c8" />
      <path d="M982 245h23v93h-11v-22h-12z" fill="#dfe8cb" />
      <path d="M580 184h60l-8 14-20 3z" fill="#dde6c9" />
      <path d="M798 186h22l-7 4 1 12-8-10z" fill="#b9e1f7" /><path d="M929 403c28 5 50 4 76 14M744 411l-2 20" stroke="#bce3f8" strokeWidth="2.500" fill="none" />
      <g fontFamily="Noto Sans" fontSize="10" fontWeight="600" fill="#8a8a8a" stroke="#f3f2ed" strokeWidth="2" paintOrder="stroke"><text x="597" y="209" textLength="77">Camelback Golf</text><text x="527" y="434" textLength="75">E McDonald Dr</text><text x="267" y="384.500" textLength="26">ln Dr</text><text x="269" y="244" fill="#6a9c5e" fontSize="11">k</text></g>
      <g clipPath="url(#img)">
        <rect x="344" y="206" width="525" height="204" fill="#cba998" />
        <rect x="690" y="206" width="179" height="204" fill="#bba89a" />
        <rect x="869" y="206" width="60" height="204" fill="#c9bb85" />
        <g filter="url(#soft)"><path d="M575 218l28-4 20 14-6 18-34 6zM600 268l40-8 10 20-30 16zM520 208l50 0-10 14-34 4zM410 282l30-8 10 12-24 14zM620 300l30 4 0 20-26 6zM566 250l26-8 6 30-30 20z" fill="#c5b58e" opacity=".7" /></g>
        <g filter="url(#fine)">{Object.entries(texture).filter(([c]) => !marks.includes(c)).map(([c, d]) => <path key={c} d={d} fill={c} opacity={0.8} />)}</g>
        <path d={streets} stroke="#84786d" strokeWidth=".8" opacity=".42" />
        <g filter="url(#edge)">{hills.map((p, i) => <polygon key={i} points={p.map((q) => q.join(",")).join(" ")} fill="#aba084" />)}</g>
        <g clipPath="url(#ranges)"><g opacity=".22" className="mix-blend-multiply"><rect x="344" y="206" width="290" height="150" filter="url(#relief)" /></g></g>
        <g filter="url(#soft)"><path d="M490 228l12 6 16 24-12 8zM466 302l24-14 34-18 28-6-10 14-34 26zM540 316l50 4 30 12-40 2zM358 212l40 8-14 20-30-10z" fill="#837a5e" opacity=".45" /><path d="M500 300l40-16 6 6-30 24zM486 318l20 4-6 14zM560 324l44 6-20 8z" fill="#b6ab8c" opacity=".8" /></g>
        <g stroke="#6f6a62" strokeWidth="1.300" fill="none" opacity=".6"><path d="M426 206l2 30-1 174M344 385h585M389 303h40M344 349h86M428 244h65v28M595 206v40M595 350v60M640 246v164M687 206v204M778 330v80M868 206v204M830 206l-4 30M689 337h240M689 246h60M598 246h90M598 290h90M510 350h130M530 370h110M345 318h45M690 365h180M540 206v30M400 303c12-4 18-24 26-26" /></g>
        <path d="M776 206l20 28 30 8 40 4M826 240c-6 30-44 42-50 60" stroke="#7f7060" strokeWidth="2" fill="none" opacity=".8" />
        <path d="M642 338h36v45h-36z" fill="#dfd99b" /><path d="M644 343h10v12h-10zM650 360h15v15h-15z" fill="#eee9b5" /><path d="M646 345h4v9h-4zM664 360h10v9h-10z" fill="#d9cfc2" /><circle cx="470" cy="252" r="8.500" fill="#c3b088" stroke="#a8977a" /><path d="M550 225h25v14h-25z" fill="#c6b587" />
        {[[780, 262, 30, 32, 38], [742, 288, 22, 20, 5], [691, 208, 14, 42, 0], [768, 210, 22, 18, 42], [813, 226, 15, 20, 0], [853, 292, 14, 30, -8], [784, 305, 10, 22, 10], [782, 340, 22, 18, 0], [765, 362, 14, 22, -15], [745, 375, 14, 24, -20], [836, 222, 28, 14, 0], [755, 255, 14, 12, 0], [776, 234, 26, 8, -30], [696, 344, 12, 14, 0], [835, 210, 30, 8, 0]].map(([x, y, w, h, a], i) => blockRows(x, y, w, h, a, i))}
        <path d="M480 362l8-6 8 4 2 10-8 6-8-4zM495 370h9v8l-4 8h-5zM487 390h18v10h-18z" fill="#e2ddd7" opacity=".9" /><path d="M484 362l6-2 4 6-6 6zM490 392v6M495 392v6M500 392v6" fill="#a3988c" stroke="#b5a99d" /><circle cx="510" cy="393" r="5" fill="none" stroke="#eee" strokeWidth="1.500" />
        <path d="M371 386h5v10h-5zM378 389h4v8h-4z" fill="#7b7369" />
        <g fill="#5b5850"><path d="M872 208h22v18h-22zM888 206h28v24h-28zM916 222h12v18h-12z" /></g><path d="M870 318h42l2 18-6 18-30 2-9-14z" fill="#77726a" />
        <g fill="#f0f0ee"><path d="M873 210h4v6h-4zM889 208h4v16h-4zM895 208h4v17h-4zM902 207h5v18h-5zM909 210h5v15h-5zM895 247h9v8h-9zM917 224h3v14h-3zM922 226h3v8h-3zM872 303h8v6h-8zM691 392h10v3h-10zM693 397h6v8h-6zM703 386h6v7h-6zM711 388h4v12h-4zM700 355h5v5h-5zM712 357h6v4h-6zM876 322h7v5h-7zM890 317h8v4h-8z" /><path d="M878 332q-3 18 14 20t18-20M880 324l10 2 14-4 6 4" fill="none" stroke="#eee" strokeWidth="3.500" strokeDasharray="5 1.500" /><path d="M888 332h6v6h-6zM897 330h5v8h-5z" fill="#4c4a45" /></g>
        <path d="M882 258h46M878 243h36v28h-36z" fill="#beb07a" /><circle cx="898" cy="253" r="4" fill="#eee" />
        <path d="M869 270h60v43h-60z" fill="#8a7a62" /><path d="M871 271h16v18h-16zM871 292h16v20h-16z" fill="#69685f" />
        <g fill="#f5504a">{[[890, 290], [900, 280], [910, 276], [918, 274], [922, 281], [913, 283], [892, 305], [899, 309], [912, 306], [920, 301], [904, 295], [909, 302]].map(([x, y]) => <path key={x} d={`M${x - 5} ${y - 2}l2-3 3 1 4-1 1 4-1 4-4 1-5-1z`} />)}</g><path d="M898 290l8-2 5 9-9 4-4-6z" fill="#f5504a" stroke="#fff" strokeWidth="2.500" />
        <path d="M918 250q8-2 9 6t-5 12-4-10z" fill="#8c7a74" stroke="#f0e2de" strokeWidth="2" strokeDasharray="3 1" />
        <path d="M903 404h26v6h-26z" fill="#df5e48" /><path d="M869 380h40v8h-40z" fill="#d7ca96" opacity=".6" />
        <path d="M884 271h5v20h-5zM884 301h5v12h-5z" fill="#173fae" />
        <path d="M690 257l8 5 6-4 5 6-2 10 1 16-5 2-5-12-8-8zM797 212l12 4 18-2-14 8-5 9-6-1 4-8z" fill="#2e4250" /><path d="M752 240l-4 8 10 4 12 0-16-5zM778 258l4-2-1 16-4 8zM740 320l12 16h-8zM739 222l14-2-2-12h-4l1 8-8 2z" fill="#2d3b40" />
        <g filter="url(#ragged)">
          {golf.map((p, i) => <polygon key={i} points={p.map((q) => q.join(",")).join(" ")} fill={G} stroke={B} strokeWidth="1.200" strokeDasharray="5 5" />)}
          <g fill="none" stroke={B} strokeWidth="6.500" strokeDasharray="7 5"><path d="M433 300v-26h17v20M433 304h12l8 10 2 18-19 4-3 6v38h18l16-6-4-16-11-15-11-3M751 352l18-4 29 7 20 10 24 8 24 2v-14" /></g>
          <g fill="none" stroke={G} strokeWidth="4.500"><path d="M433 300v-26h17v18M434 303h10l8 10 3 18-17 3-5 8v38h20l15-6-4-14-11-16-10-3M466 375l8 2M751 352l18-4 29 7 20 10 24 8 22 2M855 360l10-1" /><path d="M447 348v32" strokeWidth="7" /><path d="M476 382h7" strokeWidth="4" /></g>
          <g fill="none" stroke={G} strokeWidth="8"><path d="M750 206l9 17-12 14-20 24M782 224l-26 12" /><path d="M798 236l-22 14-14 6M764 253c14 6 14 25 11 36-8 16-20 22-32 27" strokeWidth="6" /><path d="M748 350c6 20 20 40 26 80" strokeWidth="9" /><path d="M600 190l32 10 10 10" strokeWidth="5" /></g>
          <g fill="none" stroke={B} strokeWidth="1.800" strokeDasharray="3 4"><path d="M716 275l6 24 12 34M726 272l4 30 14 16M752 212l10 12-24 16M774 262l4 16-10 22-18 16M747 355l10 26 12 28M640 205l10 26 20 10M652 200l14 20 8 18M442 350l18 18M726 262l18-20M708 296l8 20M736 318l12-4" /></g>
          <path d="M664 212l10 4 4 12-6 4-6-8z" fill="#cfa590" /><path d="M690 340l10 4 7 4v8l-5-5-12-4z" fill={G} />
        </g>
        <path d="M822 279l6-7 10-4-3 8-6 5-6 0zM804 305l5 3-1 5-5-4zM834 307l6 2-1 5-4-2zM538 398l6-1 1-3 5-1-1 8-5 0-4 4z" fill={B} />
        <path d="M521 210l6 0v8h-5zM447 234l6 2-2 5-4-1z" fill="none" stroke={G} strokeWidth="1.600" /><path d="M786 382h8v3l-4 1h-4zM780 398l4-1v3l4-2v3h4v-3l5 2" fill={G} />
      </g>
      <path d="M769 410h9v18h-4z" fill={G} />
      {marks.map((c) => <path key={c} d={texture[c]} fill={c} shapeRendering="crispEdges" />)}
      <path d="M604 186l30 6 28-4 18 10-2 8h-38l-16-6-22-6z" fill={G} opacity=".3" filter="url(#ragged)" />
      <path d="M898 184c24 10 32 16 34 36 4 30 5 52 3 78l-6 15" stroke="#aaa9a4" strokeWidth="5" fill="none" opacity=".8" /><path d="M898 184c24 10 32 16 34 36 4 30 5 52 3 78l-6 15" stroke="#ccc" strokeWidth="3" fill="none" />
      <path d="M929 313l-18 45-14 46-3 6" stroke="#696b66" strokeWidth="3.500" fill="none" /><path d="M894 409l-6 22" stroke="#bdbdbb" strokeWidth="5" />
      <path d="M754 354l40 2 22 14 26 5 26 5 18 16 43 7M746 368c-8 20-2 30-1 42" stroke="#57584e" strokeWidth="1.300" fill="none" />
      <path d="M389.500 184L387.500 431M884.500 184L883 431" stroke="#00f5c4" strokeWidth="3" />
      <path d="M977 408h5v-3h9l3 3h3v14h-4v2h-4v-2h-4v2h-4v-2h-4z" fill="#f9f9f9" stroke="#555" strokeWidth="1.300" /><path d="M980 412h13M980 415.500h13M980 419h13" stroke="#555" />
    </svg>
  );
};

/* ---------- centre ---------- */
const VSep = ({ className = "" }: P) => <div className={"h-[15px] w-px shrink-0 bg-[#999] " + className} />;
const Rows = ({ k }: { k: number }) => {
  const dim = k !== 0, c = dim ? "#bfc1c3" : "#555";
  return <Ic>
    {k === 0 && <><path d="M.5 1.500h10v5H.5zM.5 4h10" fill="#fff" stroke={c} strokeWidth="1.400" /><path d="M6.500 10h9v5.500h-9zM6.500 12.700h9" fill="#8fd4f2" stroke={c} strokeWidth="1.400" /><path d="M12 1c2 0 2 2 2 5M12 4l2 2 1.500-2M4 15c-2 0-2-2-2-4M.5 12L2 10l2 2" stroke={c} /></>}
    {k === 1 && <path d="M.5 2h14v12H.5zM.5 5h14M.5 8h14M.5 11h14" stroke={c} fill="#f2f3f4" />}
    {k === 2 && <><path d="M.5 2h14v11H.5zM.5 5h14M.5 8h14" stroke={c} fill="#dcedf4" /><path d="M2 10l6 6M8 10l-6 6" stroke="#dca79c" strokeWidth="1.800" /></>}
    {k === 3 && <path d="M3.500 4V1h12v8h-2M.5 5h12v10H.5zM.5 8.500h12M.5 12h12" stroke={c} fill="#dcedf4" />}
    {k === 4 && <><path d="M7 1h8v8H8M7 3.500h8M8 6h7" stroke={c} /><circle cx="5" cy="8.500" r="4" fill="#f2f6f8" stroke="#b5d3e4" /><path d="M2.500 8.500h5M5 6v5" stroke="#b5d3e4" /><path d="M8 12l3.500 3.500" stroke="#e2ccb5" strokeWidth="2" /></>}
  </Ic>;
};
const TBtn = ({ icon, children, w, dim = false }: { icon: React.ReactNode; children: React.ReactNode; w: string; dim?: boolean }) => <div className={"flex shrink-0 items-center gap-[3px] whitespace-nowrap " + w + (dim ? " text-[#bfc1c3]" : "")}>{icon}{children}</div>;
const Centre = () => (
  <section className="ml-[6px] mt-[5px] flex w-[737px] flex-col text-[12px] tracking-[-0.27px] text-[#4a4a4a]">
    <div className="flex h-[22px] items-center pl-[6px] text-[#202020]">
      <MapIcon /><span className="ml-[5px] mt-[3px] w-[125px] tracking-[-0.35px]">Preliminary Study</span>
      <Case k={3} /><span className="ml-[5px] mt-[3px] w-[67px]">Catalog</span>
      <div className="flex h-[23px] w-[77px] items-center rounded-t-[4px] bg-[#d4d6da] pl-[6px] text-[#4a4a4a]"><MapIcon /><span className="ml-[5px] mt-[3px] w-[34px]">Map</span><X s={9} c="#666" /></div>
      <div className="flex-1" /><div className="pr-[5px]"><Chev s={9} sw={1.400} /></div>
    </div>
    <div className="h-[3px] bg-[#d2d3d6]" />
    <div className="relative h-[247px]">
      <MapCanvas />
      <div className="absolute right-[3px] top-[1px] flex h-[23px] w-[50px] items-center gap-[4px] border border-[#ccc] bg-[#f7f9f8] pl-[5px]">Time<Chev s={10} sw={1.700} /></div>
    </div>
    <div className="flex h-[25px] items-center border border-t-0 border-[#d0d2d3] bg-[#f7f9f8] pl-[5px]">
      <div className="flex h-[22px] w-[100px] items-center justify-between border border-[#999] bg-white px-[5px] pt-px tracking-[-0.4px] text-[#202020]">1:79,980<Caret /></div>
      <VSep className="ml-[4px]" />
      <div className="ml-[6px] flex items-center gap-x-[4px]">
        <Ic><path d="M.5.5h10v10H.5zM5.500.5v10M.5 5.500h10" stroke="#777" /><path d="M11.500 7v9M7 11.500h9" stroke="#b5dcf2" strokeWidth="3" /><path d="M11.500 8v7M8 11.500h7" stroke="#555" /></Ic>
        <Ic><path d="M1.500 1.500h12v12h-12zM1.500 4.500h12M1.500 7.500h12M1.500 10.500h12M4.500 1.500v12M7.500 1.500v12M10.500 1.500v12" stroke="#999" strokeWidth=".9" /></Ic>
        <Ic><path d="M1 13l6-7 3 3 4-4" stroke="#6db2de" strokeWidth="2" strokeDasharray="2 1" /><g fill="#fff" stroke="#777"><path d="M.5 2.500h3v3h-3zM11.500 7.500h4v4h-4z" /></g><path d="M.5 11.500h4v4h-4z" fill="#5c9a63" /><path d="M12 1v4M10 3h4M6 2h3M5 14h7" stroke="#555" /></Ic>
        <Ic><path d="M8 0v5M8 10v6" stroke="#aaa" strokeWidth="2" /><path d="M0 7.500h5M11 7.500h5" stroke="#9fb69f" strokeWidth="2" strokeDasharray="2 1" /><path d="M6.500 7.500h3M8 6v3" stroke="#555" /></Ic>
        <Ic><path d="M1 10V4l4 6V4" stroke="#3c8cc7" strokeWidth="1.600" /><path d="M8.500 0v15" stroke="#999" /><path d="M9.500 14l5-6" stroke="#888" /><path d="M10 2c3 0 3 3 3 5M11 5l2 2 2-2" stroke="#4fa3dc" strokeWidth="1.300" /></Ic>
      </div>
      <div className="ml-[6px] mt-[2px]"><Chev s={10} sw={1.500} c="#222" /></div>
      <VSep className="ml-[8px]" />
      <span className="ml-[41px] w-[179px] shrink-0 whitespace-nowrap tracking-[-0.57px]">12,458,022.25W 3,965,246.46N m</span>
      <Chev s={11} sw={1.600} /><VSep className="ml-[41px]" />
      <div className="ml-[7px] flex w-[130px] items-center gap-[4px] whitespace-nowrap tracking-[-0.4px] text-[#9b9d9d]"><ZoomSel blue />Selected Features: 0</div>
      <VSep /><div className="ml-[9px]"><Parcel s={13} fill="#f7f9f8" c="#aaa" /></div><VSep className="ml-[8px]" />
      <Ic w={11} h={14} className="ml-[8px]"><path d="M0 0h4v14H0zM7 0h4v14H7z" fill="#666" /></Ic><VSep className="ml-[8px]" />
      <Ic w={15} h={15} className="ml-[7px]"><circle cx="7.500" cy="7.500" r="5.200" stroke="#4a9cd8" strokeWidth="3.800" /><path d="M7.500 2.300a5.200 5.200 0 015 4" stroke="#a9d2ed" strokeWidth="3.800" /></Ic>
    </div>
    <div className="mt-[6px] flex h-[22px] items-center justify-between">
      <div className="flex h-[22px] w-[167px] items-center rounded-t-[3px] bg-[#007ac2] pl-[6px] pt-px text-white"><Grid w={15} /><span className="ml-[5px] flex-1 pt-px tracking-[-0.33px]">NDVI_RefinedMask.tif</span><X s={9} c="#fff" /><div className="w-[7px]" /></div>
      <div className="pr-[5px]"><Chev s={9} sw={1.400} /></div>
    </div>
    <div className="h-[2px] bg-[#007ac2]" />
    <div className="flex h-[272px] flex-col border border-[#d0d2d3] bg-[#f7f9f8] px-[1px] pt-[1px]">
      <div className="flex h-[30px] items-center border border-[#bfc2c8] bg-[#eff0f2] pl-[5px]">
        <b className="w-[37px] font-semibold">Field:</b>
        <TBtn w="w-[51px]" icon={<Grid sub={<><path d="M5 8h5v3H5z" fill="#c9b9df" /><path d="M4.500 10v6M2 13h5" stroke="#555" strokeWidth="1.600" /></>} />}>Add</TBtn>
        <TBtn w="w-[79px]" icon={<Grid sub={<><path d="M5 8h5v3H5z" fill="#c9b9df" /><path d="M6 14h5M6 16h5" stroke="#555" strokeWidth="1.200" /></>} />}>Calculate</TBtn>
        <div className="mr-[6px] h-[22px] w-px bg-[#ccc]" />
        <b className="w-[63px] font-semibold">Selection:</b>
        <TBtn w="w-[131px]" icon={<Ic><path d="M.5.5h9v4M.5.5v9h4" stroke="#777" /><path d="M1 1h3l2 3v5H1z" fill="#aae4f8" /><rect x="6.500" y="6.500" width="9" height="9" fill="#fff" stroke="#555" /><path d="M7 7h8v2H7z" fill="#4fa3dc" /><path d="M7 10.500h8M7 13h8M9.500 9v6M12.500 9v6" stroke="#555" /></Ic>}><span className="tracking-[-0.34px]">Select By Attributes</span></TBtn>
        <TBtn dim w="w-[76px]" icon={<Rows k={4} />}>Zoom To</TBtn><TBtn w="w-[64px]" icon={<Rows k={0} />}>Switch</TBtn><TBtn dim w="w-[56px]" icon={<Rows k={1} />}>Clear</TBtn><TBtn dim w="w-[62px]" icon={<Rows k={2} />}>Delete</TBtn><TBtn dim w="flex-1" icon={<Rows k={3} />}>Copy</TBtn>
        <div className="pr-[7px]"><Burger /></div>
      </div>
      <div className="mt-[1px] flex h-[212px] border border-[#c8cacc] bg-white">
        <div className="flex min-w-0 flex-1 flex-col">
          <div className="h-[192px]">
            <div className="grid w-[133px] grid-cols-[17px_28px_37px_51px] grid-rows-[25px_25px_25px_25px] text-[12px] [&>div]:border-b [&>div]:border-r [&>div]:border-[#ccc] [&>div]:leading-6">
              <div className="flex items-end justify-end bg-[#f4f4f4] p-[2px]"><Ic w={10} h={10}><path d="M10 0v10H0z" fill="#c2c2c2" /></Ic></div>
              <div className="border-b-2! border-b-[#007ac2]! bg-[#c9e3f6] pt-px text-center font-semibold">OID</div><div className="bg-[#ebebeb] pt-px text-center font-semibold tracking-[-0.4px]">Value</div><div className="bg-[#ebebeb] pl-[4px] pt-px font-semibold tracking-[-0.4px]">Count</div>
              <div className="border-r-2! border-r-[#007ac2]! bg-[#c9e3f6] text-center">1</div><div className="bg-[#c9e3f6] pl-[4px]">0</div><div className="pr-[4px] text-right">0</div><div className="pr-[3px] text-right tracking-[-0.8px]">1027141</div>
              <div className="bg-[#ebebeb] text-center">2</div><div className="bg-[#ebebeb] pl-[4px]">1</div><div className="bg-[#ebebeb] pr-[4px] text-right">1</div><div className="bg-[#ebebeb] pr-[3px] text-right tracking-[-0.6px]">74639</div>
              <div className="bg-[#ebebeb]" /><div className="col-span-3 overflow-hidden whitespace-nowrap pl-[4px] pt-[2px]"><div className="w-[107px] overflow-hidden">Click to add new row.</div></div>
            </div>
          </div>
          <div className="flex h-[18px] items-center justify-between bg-[#f4f4f4] px-[5px]"><div className="rotate-90"><Chev c="#bbb" sw={1} /></div><div className="-rotate-90"><Chev c="#bbb" sw={1} /></div></div>
        </div>
        <div className="flex w-[17px] flex-col items-center justify-between bg-[#f3f3f3] pb-[20px] pt-[5px]"><div className="rotate-180"><Chev c="#bbb" sw={1} /></div><Chev c="#bbb" sw={1} /></div>
      </div>
      <div className="flex flex-1 items-center">
        <div className="flex h-[22px] w-8 shrink-0 items-center justify-center border border-[#8f9191] bg-[#cde3f3]"><Ic w={16} h={13}><path d="M.5 1h15v11H.5zM.5 4h15M.5 6.700h15M.5 9.500h15" stroke="#555" fill="#fff" /></Ic></div>
        <Ic w={16} h={13} className="ml-[9px]"><path d="M.5 1h15v10H.5z" fill="#a9dcf4" stroke="#555" /><path d="M.5 4.500h15M.5 7.500h15M5.500 1v10M10.500 1v10" stroke="#3e88b5" /></Ic>
        <Ic w={9} h={9} className="ml-[18px]"><path d="M1 0v9" stroke="#aaa" strokeWidth="1.500" /><path d="M8 1v7L2.500 4.500z" fill="#bbb" /></Ic>
        <Ic w={9} h={9} className="ml-[14px]"><path d="M8 0v9" stroke="#444" strokeWidth="1.500" /><path d="M0 0v9L6.500 4.500z" fill="#444" /></Ic>
        <span className="ml-[13px] w-[248px] shrink-0 tracking-[-0.37px]">0 of 2 selected</span><span className="w-[34px] shrink-0">Filters:</span>
        <div className="ml-[5px] flex h-[23px] w-[42px] shrink-0 items-center justify-around bg-[#eff0f2]">
          <Ic><circle cx="8" cy="8" r="7" stroke="#d2d8db" /><circle cx="8" cy="8" r="4.500" fill="#e0eae4" stroke="#cfd9d3" /><path d="M8 5v4h3" stroke="#b9c6c2" /></Ic>
          <Ic><path d="M2 1v6M5 1v6M8 1v6M1 4h2M4 3h2M7 5h2" stroke="#cdd5d8" /><path d="M4 9a5 5 0 007 4 5 5 0 001-9" fill="#e0eae4" stroke="#cfd9d3" /></Ic>
        </div>
        <Ic w={17} h={17} className="ml-[4px]"><path d="M.5 1.500h12L8 7v8H5.500V7z" fill="#aaa" stroke="#666" /><path d="M8.500 8.500h7.500v7H8.500z" fill="#fff" stroke="#2f8fd4" strokeWidth="2" strokeDasharray="2 1" /></Ic>
        <VSep className="ml-[1px]" />
        <Ic w={10} h={15} className="ml-[6px]"><path d="M5 1v6M1.500 5L5 1l3.500 4" stroke="#a9ccb0" strokeWidth="2" /><path d="M5 8v6M1.500 10L5 14l3.500-4" stroke="#edcba0" strokeWidth="2" /></Ic>
        <div className="ml-[14px] h-[2px] w-[7px] shrink-0 bg-[#555]" />
        <div className="ml-[8px] flex shrink-0 items-center"><div className="h-[3px] w-[48px] bg-[#a9a9a9]" /><div className="h-[11px] w-[3px] bg-[#666]" /><div className="h-[3px] w-[49px] bg-[#dcdcdc]" /></div>
        <Ic w={8} h={8} className="ml-[7px]"><path d="M4 0v8M0 4h8" stroke="#555" strokeWidth="1.800" /></Ic>
        <div className="ml-[7px] flex h-[22px] w-[60px] shrink-0 items-center justify-between bg-white px-[6px] tracking-[-0.6px] text-[#202020]">100%<Caret /></div>
        <VSep className="ml-[5px]" />
        <Ic s={16} className="ml-[7px]"><path d="M1 7a6.500 6 0 0112-3M15 9a6.500 6 0 01-12 3" stroke="#3f96d5" strokeWidth="2.200" /><path d="M15 0v6h-6zM1 16v-6h6z" fill="#3f96d5" /></Ic>
      </div>
    </div>
  </section>
);

/* ---------- symbology pane ---------- */
const ramp = ["bg-[#568039]", "bg-[#7452e3]", "bg-[#fb88a8]", "bg-[#5fbaf3]", "bg-[#dff858]", "bg-[#3e4985]", "bg-[#5cf490]", "bg-[#de9f4d]", "bg-[#f282f0]", "bg-[#75d8bd]", "bg-[#98705c]", "bg-[#93347c]", "bg-[#9c7fd6]", "bg-[#587c91]"];
const Symbology = () => (
  <section className="ml-[6px] mt-[5px] w-[349px] text-[12px] tracking-[-0.22px] text-[#4a4a4a]">
    <div className="flex h-[581px] flex-col rounded-t-[4px] border border-[#cdcfd0] bg-[#f7f9f8]">
      <PaneHead>Symbology - NDVI_RefinedMask.tif</PaneHead>
      <div className="flex h-[37px] justify-between pl-[10px] pr-[9px]">
        <div className="flex h-[37px] w-16 border-b-2 border-[#dedfe0]">
          <div className="relative flex w-8 justify-center pt-1"><Ic w={24} h={24}><path d="M4 1c6 1 12-1 18 0l1 17c-7 1-13-1-22 2z" fill="#e6cf47" /><path d="M19 9L8 19" stroke="#666" strokeWidth="2" /><path d="M8 17l2 2-6 5z" fill="#b87840" /></Ic><div className="absolute left-0 top-[33px] h-[3px] w-8 bg-[#007ac2]" /></div>
          <div className="flex w-8 justify-center pt-1"><Ic w={24} h={24}><path d="M17 1L6 11" stroke="#777" strokeWidth="2" /><path d="M5 9l2 2-6 4z" fill="#b87840" /><path d="M9 12.500h14v9H9z" fill="#fff" stroke="#666" /><path d="M8 8l3 4" stroke="#666" /><path d="M12 15.500h1.500M12 18.500h1.500" stroke="#7d5fc0" strokeWidth="2" /><path d="M15 15.500h6M15 18.500h6" stroke="#777" /></Ic></div>
        </div>
        <div className="pt-[11px]"><Burger /></div>
      </div>
      <div className="mt-[8px] h-[24px] pl-[6px] text-[13px] font-semibold leading-[21px] tracking-[0px]">Primary symbology</div>
      <div className="mx-[6px] flex h-[22px] items-center justify-between border border-[#8f9191] bg-white pl-[3px] pr-[5px]"><span className="mt-[2px]">Unique Values</span><Caret /></div>
      <div className="mt-[6px] flex h-[22px] items-center pl-[6px]"><span className="w-[84px]">Field 1</span><div className="flex h-[22px] w-[246px] items-center justify-between border border-[#8f9191] bg-white pl-[3px] pr-[5px] text-[#202020]"><span className="mt-[2px]">Value</span><Caret /></div></div>
      <div className="mt-[6px] flex h-[24px] items-center pl-[6px]"><span className="w-[85px]">Color scheme</span><div className="flex h-[24px] w-[245px] items-center justify-between border border-[#8f9191] bg-[#f7f9f8] pl-[3px] pr-[5px]"><div className="flex h-4 w-[223px]">{ramp.map((c) => <i key={c} className={"flex-1 " + c} />)}</div><Caret /></div></div>
      <div className="mx-[6px] mt-[20px] flex h-[9px] shrink-0 items-center justify-center border-y-2 border-[#cbcccc]"><div className="-mt-px flex gap-[3px] pl-[5px]"><i className="size-[4px] bg-[#bebebe]" /><i className="size-[4px] bg-[#bebebe]" /><i className="size-[4px] bg-[#bebebe]" /></div></div>
      <div className="mx-[6px] mt-[10px] flex h-[21px] shrink-0 items-end text-center text-[#202020]"><div className="z-10 -mb-px h-[22px] w-[50px] rounded-t-[3px] border border-b-0 border-[#b9bcbf] bg-[#eff0f2] leading-[22px]">Values</div><div className="h-[19px] w-[41px] rounded-tr-[3px] border border-b-0 border-l-0 border-[#b9bcbf] bg-[#dfe0e1] leading-[19px]">Mask</div></div>
      <div className="mx-[6px] h-[333px] shrink-0 border border-[#b9bcbf] bg-[#eff0f2]">
        <div className="flex h-[48px] items-center justify-end pr-[10px] pt-[4px]">
          <Ic w={16} h={16}><g stroke="#777"><path d="M.5.5h8v4h-8z" fill="#d9cdea" /><path d="M.5 4.500h8v3.500h-8z" fill="#f5edc0" /><path d="M.5 8h8v3.500h-8z" fill="#efb38a" /><path d="M.5 11.500h8v4h-8z" fill="#cde8f5" /></g><path d="M10 1v6M7 4h6" stroke="#444" strokeWidth="1.600" /><path d="M13.500 7v7M11.500 12l2 2.500 2-2.500" stroke="#4fa3dc" strokeWidth="1.200" /></Ic>
          <Ic w={12} h={12} className="ml-[12px]"><path d="M6 0v12M0 6h12" stroke="#58a35e" strokeWidth="2" /></Ic>
          <Ic w={10} h={12} className="ml-[15px]"><path d="M5 12V1.500M1 6l4-4.500L9 6" stroke="#b5b7b9" strokeWidth="1.600" /></Ic>
          <Ic w={10} h={12} className="ml-[16px] mr-[11px]"><path d="M5 0v10.500M1 6l4 4.500L9 6" stroke="#b5b7b9" strokeWidth="1.600" /></Ic>
          <div className="-mt-[2px] flex h-[22px] w-[69px] items-center justify-between rounded-[3px] border border-[#dcdddf] pl-[10px] pr-[7px]">More<Caret /></div>
        </div>
        <div className="ml-[10px] flex h-[269px] w-[313px] flex-col border border-[#c8cacc]">
          <div className="grid h-[24px] w-[309px] grid-cols-[58px_80px_80px_91px] border-b border-[#c8cacc] bg-[#dedede] text-[11.500px] leading-[25px] [&>div]:border-r [&>div]:border-[#c8cacc] [&>div]:pl-[5px]"><div className="bg-[#9fd5f5]">Color</div><div>Value</div><div>Label</div><div /></div>
          <div className="flex h-[42px] items-center border-b-[1px] border-[#c8cacc] pl-[14px]"><Chev s={9} sw={1.800} c="#666" /><div className="ml-[10px] h-[19px] w-[100px] border border-[#ccc] bg-white pl-[3px] leading-[18px] text-[#202020]">Value</div><span className="ml-[44px] w-[59px] tracking-[-0.4px]">2 Values</span><X s={10} c="#888" /></div>
          {[0, 1].map((v) => (
            <div key={v} className={"ml-[3px] grid shrink-0 grid-cols-[60px_80px_80px_1fr] border-b border-[#c8cacc] [&>div]:border-[#c8cacc] " + (v ? "h-[31px] bg-[#ebebeb] leading-[33px]" : "h-[32px] border-b-2 bg-white leading-[33px]")}>
              <div className="flex items-center justify-center border-r pr-px">{v === 1 && <i className="h-5 w-4 bg-[#66e84c]" />}</div><div className="border-r pl-[13px]">{v}</div><div className="border-r pl-[13px]">{v}</div><div />
            </div>
          ))}
          <div className="flex-1" />
          <div className="flex h-[17px] items-center justify-between bg-[#ebebeb] px-[5px]"><div className="rotate-90"><Chev s={7} /></div><div className="h-[9px] w-[275px] rounded-full bg-[#b3b3b3]" /><div className="-rotate-90"><Chev s={7} /></div></div>
        </div>
      </div>
    </div>
    <div className="flex h-5 items-center"><span className="w-[53px] pl-[6px] pt-px">Catalog</span><div className="-mt-px flex h-[21px] w-[71px] items-center justify-center rounded-b-[4px] border border-t-0 border-[#d0d2d3] bg-[#f7f9f8] pt-[2px] text-[#007ac2]">Symbology</div><span className="ml-[7px] pt-px tracking-[-0.27px]">Geoprocessing</span></div>
  </section>
);

export default function App() {
  return (
    <div className="relative flex h-[768px] w-[1366px] flex-col overflow-hidden bg-[#ebebeb] font-['Open_Sans','Noto_Sans',sans-serif] tracking-[-0.2px]">
      <Ribbon />
      <main className="flex h-[612px]"><Contents /><Centre /><Symbology /></main>
      <footer className="h-[2px] bg-[#1f1f1f]" />
      <div className="pointer-events-none absolute left-[1073px] top-[687px] text-[#999] opacity-60"><div className="text-[19px] leading-[26px] tracking-[0.08px]">Activate Windows</div><div className="text-[14px] leading-[19px] tracking-[0.2px]">Go to Settings to activate Windows.</div></div>
    </div>
  );
}
